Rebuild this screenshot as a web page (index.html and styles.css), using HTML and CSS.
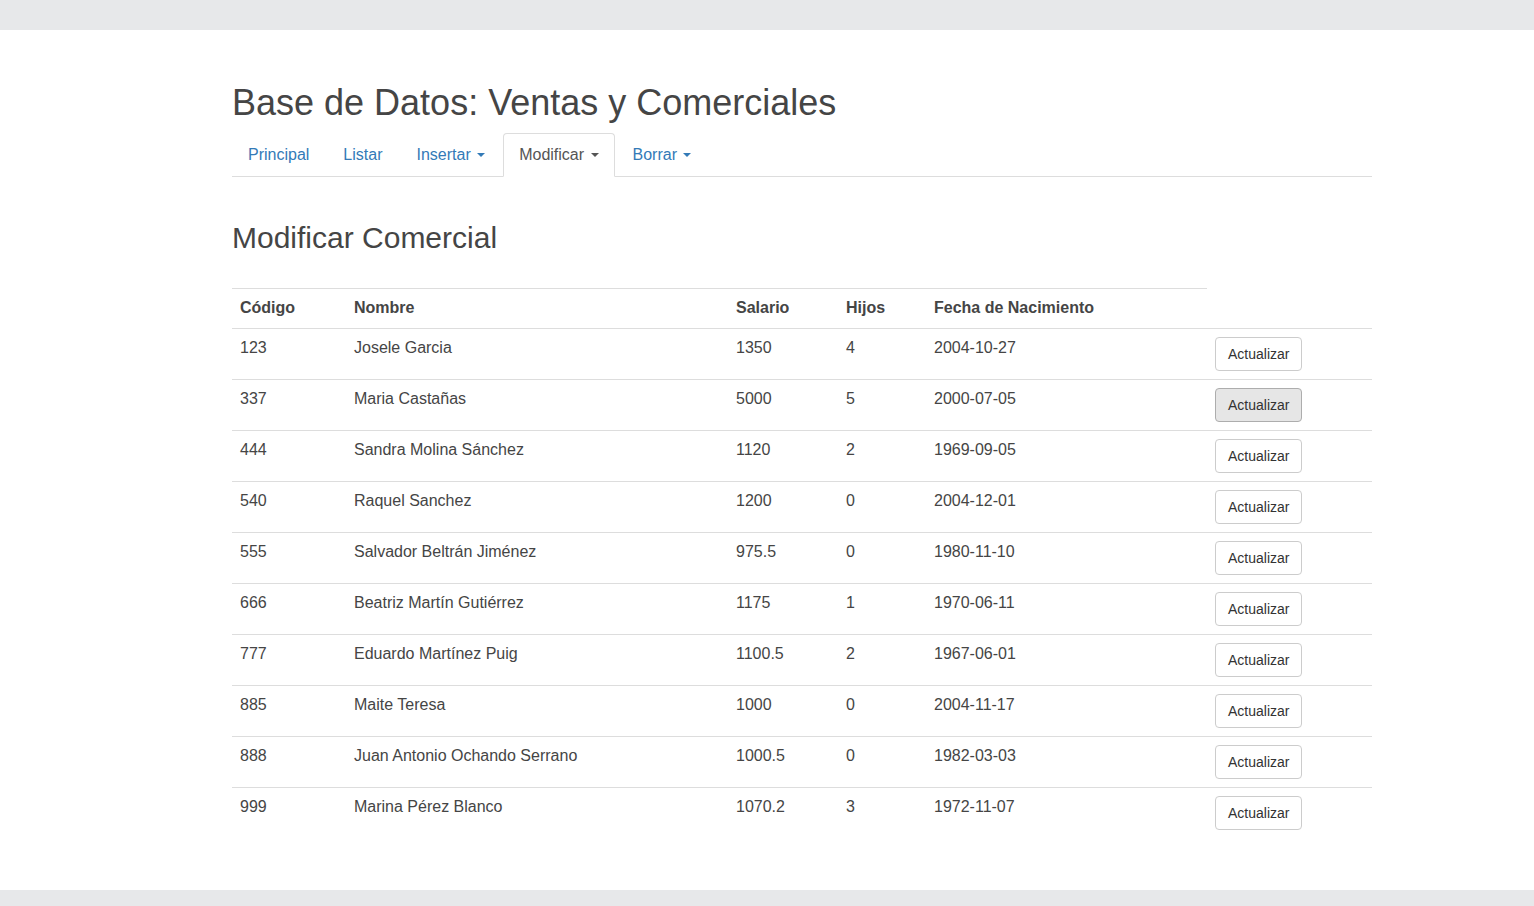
FILE: index.html
```html
<!DOCTYPE html>
<html lang="es">
<head>
<meta charset="utf-8">
<title>Base de Datos: Ventas y Comerciales</title>
<link rel="stylesheet" href="styles.css">
</head>
<body>
<div class="topbar"></div>
<main class="page">
  <div class="container">
    <h1 class="title">Base de Datos: Ventas y Comerciales</h1>
    <ul class="tabs">
      <li class="tab"><a href="#">Principal</a></li>
      <li class="tab"><a href="#">Listar</a></li>
      <li class="tab"><a href="#">Insertar <span class="caret"></span></a></li>
      <li class="tab active"><a href="#">Modificar <span class="caret"></span></a></li>
      <li class="tab"><a href="#">Borrar <span class="caret"></span></a></li>
    </ul>
    <h2 class="subtitle">Modificar Comercial</h2>
    <table class="data">
      <colgroup>
        <col class="c-cod"><col class="c-nom"><col class="c-sal"><col class="c-hij"><col class="c-fec"><col class="c-btn">
      </colgroup>
      <thead>
        <tr><th>Código</th><th>Nombre</th><th>Salario</th><th>Hijos</th><th>Fecha de Nacimiento</th></tr>
      </thead>
      <tbody>
        <tr><td>123</td><td>Josele Garcia</td><td>1350</td><td>4</td><td>2004-10-27</td><td><button class="btn">Actualizar</button></td></tr>
        <tr><td>337</td><td>Maria Castañas</td><td>5000</td><td>5</td><td>2000-07-05</td><td><button class="btn hover">Actualizar</button></td></tr>
        <tr><td>444</td><td>Sandra Molina Sánchez</td><td>1120</td><td>2</td><td>1969-09-05</td><td><button class="btn">Actualizar</button></td></tr>
        <tr><td>540</td><td>Raquel Sanchez</td><td>1200</td><td>0</td><td>2004-12-01</td><td><button class="btn">Actualizar</button></td></tr>
        <tr><td>555</td><td>Salvador Beltrán Jiménez</td><td>975.5</td><td>0</td><td>1980-11-10</td><td><button class="btn">Actualizar</button></td></tr>
        <tr><td>666</td><td>Beatriz Martín Gutiérrez</td><td>1175</td><td>1</td><td>1970-06-11</td><td><button class="btn">Actualizar</button></td></tr>
        <tr><td>777</td><td>Eduardo Martínez Puig</td><td>1100.5</td><td>2</td><td>1967-06-01</td><td><button class="btn">Actualizar</button></td></tr>
        <tr><td>885</td><td>Maite Teresa</td><td>1000</td><td>0</td><td>2004-11-17</td><td><button class="btn">Actualizar</button></td></tr>
        <tr><td>888</td><td>Juan Antonio Ochando Serrano</td><td>1000.5</td><td>0</td><td>1982-03-03</td><td><button class="btn">Actualizar</button></td></tr>
        <tr><td>999</td><td>Marina Pérez Blanco</td><td>1070.2</td><td>3</td><td>1972-11-07</td><td><button class="btn">Actualizar</button></td></tr>
      </tbody>
    </table>
  </div>
</main>
<div class="bottombar"></div>
</body>
</html>
```
FILE: styles.css
```css
html, body {
  margin: 0;
  padding: 0;
}
body {
  background: #e7e8ea;
  font-family: "Liberation Sans", Arial, Helvetica, sans-serif;
  font-size: 16px;
  line-height: 22px;
  color: #454545;
}
.topbar {
  height: 30px;
  background: #e7e8ea;
}
.page {
  background: #fff;
  padding: 33px 0 52px;
}
.bottombar {
  height: 16px;
  background: #e7e8ea;
}
.container {
  width: 1140px;
  margin-left: 232px;
}
.title {
  font-size: 36px;
  font-weight: 500;
  line-height: 1.1;
  margin: 20px 0 10px;
  color: #454545;
}
.tabs {
  list-style: none;
  margin: 0;
  padding: 0;
  display: flex;
  border-bottom: 1px solid #ddd;
}
.tab {
  margin-right: 2px;
  margin-bottom: -1px;
}
.tab a {
  display: block;
  padding: 10px 15px;
  line-height: 22px;
  border: 1px solid transparent;
  border-radius: 4px 4px 0 0;
  color: #337ab7;
  text-decoration: none;
}
.tab.active a {
  color: #555;
  background: #fff;
  border-color: #ddd #ddd transparent;
}
.caret {
  display: inline-block;
  width: 0;
  height: 0;
  margin-left: 2px;
  vertical-align: middle;
  border-top: 4px solid;
  border-right: 4px solid transparent;
  border-left: 4px solid transparent;
}
.subtitle {
  font-size: 30px;
  font-weight: 500;
  line-height: 1.1;
  margin: 44px 0 34px;
  color: #454545;
}
.data {
  width: 1140px;
  table-layout: fixed;
  border-collapse: collapse;
  border-spacing: 0;
}
.c-cod { width: 114px; }
.c-nom { width: 382px; }
.c-sal { width: 110px; }
.c-hij { width: 88px; }
.c-fec { width: 281px; }
.c-btn { width: 165px; }
.data th {
  text-align: left;
  font-weight: bold;
  padding: 8px 8px 9px;
  line-height: 22px;
  border-top: 1px solid #ddd;
  vertical-align: top;
}
.data td {
  padding: 8px;
  line-height: 22px;
  border-top: 1px solid #ddd;
  vertical-align: top;
}
.btn {
  display: inline-block;
  font-family: "Liberation Sans", Arial, Helvetica, sans-serif;
  font-size: 14px;
  line-height: 20px;
  padding: 6px 12px;
  color: #333;
  background: #fff;
  border: 1px solid #ccc;
  border-radius: 4px;
  cursor: pointer;
  margin: 0;
}
.btn.hover {
  background: #e6e6e6;
  border-color: #adadad;
}
```
